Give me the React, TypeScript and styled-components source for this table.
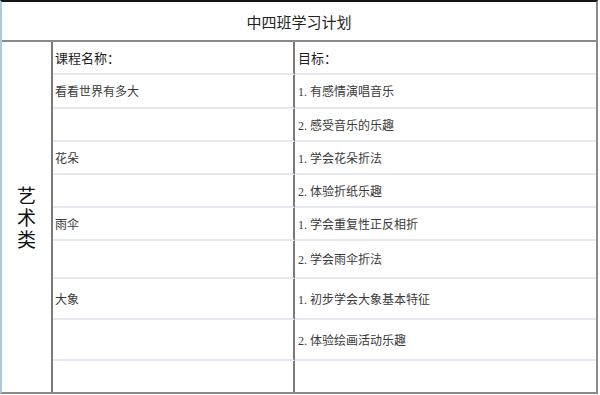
import React from "react";
import styled, { createGlobalStyle } from "styled-components";

const GlobalStyle = createGlobalStyle`
    html, body {
        margin: 0;
        padding: 0;
        background: #ffffff;
    }
    body {
        font-family: "Noto Sans CJK SC", "Noto Sans", sans-serif;
    }
`;

const Sheet = styled.div`
    width: 598px;
    box-sizing: border-box;
    border-left: 2px solid #a9c9e6;
    border-top: 2px solid #151515;
    border-right: 2px solid #8a8a8a;
    border-bottom: 2px solid #8a8a8a;
`;

const Title = styled.div`
    height: 38px;
    display: flex;
    align-items: center;
    justify-content: center;
    font-size: 15px;
    color: #222;
    border-bottom: 2px solid #8a8a8a;
`;

const Body = styled.div`
    display: grid;
    grid-template-columns: 51px 242px 1fr;
`;

const Category = styled.div<{ $rows: number }>`
    grid-row: 1 / span ${(p) => p.$rows};
    border-right: 2px solid #7a7a7a;
    display: flex;
    align-items: center;
    justify-content: center;
`;

const VerticalText = styled.span`
    writing-mode: vertical-rl;
    text-orientation: upright;
    font-size: 19px;
    letter-spacing: 3px;
    line-height: 1;
    color: #111;
    padding-top: 3px;
`;

const Cell = styled.div<{ $h: number; $last?: boolean; $divider?: boolean; $head?: boolean }>`
    height: ${(p) => p.$h}px;
    box-sizing: border-box;
    display: flex;
    align-items: center;
    padding-left: ${(p) => (p.$divider ? 2 : 3)}px;
    border-bottom: ${(p) => (p.$last ? "none" : "2px solid #e7e8f2")};
    border-right: ${(p) => (p.$divider ? "2px solid #7a7a7a" : "none")};
    font-family: "Liberation Serif", "Noto Sans CJK SC", serif;
    font-size: ${(p) => (p.$head ? 13 : 12)}px;
    color: ${(p) => (p.$head ? "#1e1e1e" : "#3a3a3a")};
    white-space: nowrap;
`;

const rows: { name: string; goal: string; h: number }[] = [
    { name: "课程名称：", goal: "目标：", h: 33 },
    { name: "看看世界有多大", goal: "1. 有感情演唱音乐", h: 34 },
    { name: "", goal: "2. 感受音乐的乐趣", h: 33 },
    { name: "花朵", goal: "1. 学会花朵折法", h: 33 },
    { name: "", goal: "2. 体验折纸乐趣", h: 33 },
    { name: "雨伞", goal: "1. 学会重复性正反相折", h: 33 },
    { name: "", goal: "2. 学会雨伞折法", h: 38 },
    { name: "大象", goal: "1. 初步学会大象基本特征", h: 41 },
    { name: "", goal: "2. 体验绘画活动乐趣", h: 41 },
    { name: "", goal: "", h: 31 },
];

export default function App() {
    return (
        <>
            <GlobalStyle />
            <Sheet>
                <Title>中四班学习计划</Title>
                <Body>
                    <Category $rows={rows.length}>
                        <VerticalText>艺术类</VerticalText>
                    </Category>
                    {rows.map((r, i) => (
                        <React.Fragment key={i}>
                            <Cell $h={r.h} $divider $head={i === 0} $last={i === rows.length - 1}>
                                {r.name}
                            </Cell>
                            <Cell $h={r.h} $head={i === 0} $last={i === rows.length - 1}>
                                {r.goal}
                            </Cell>
                        </React.Fragment>
                    ))}
                </Body>
            </Sheet>
        </>
    );
}
